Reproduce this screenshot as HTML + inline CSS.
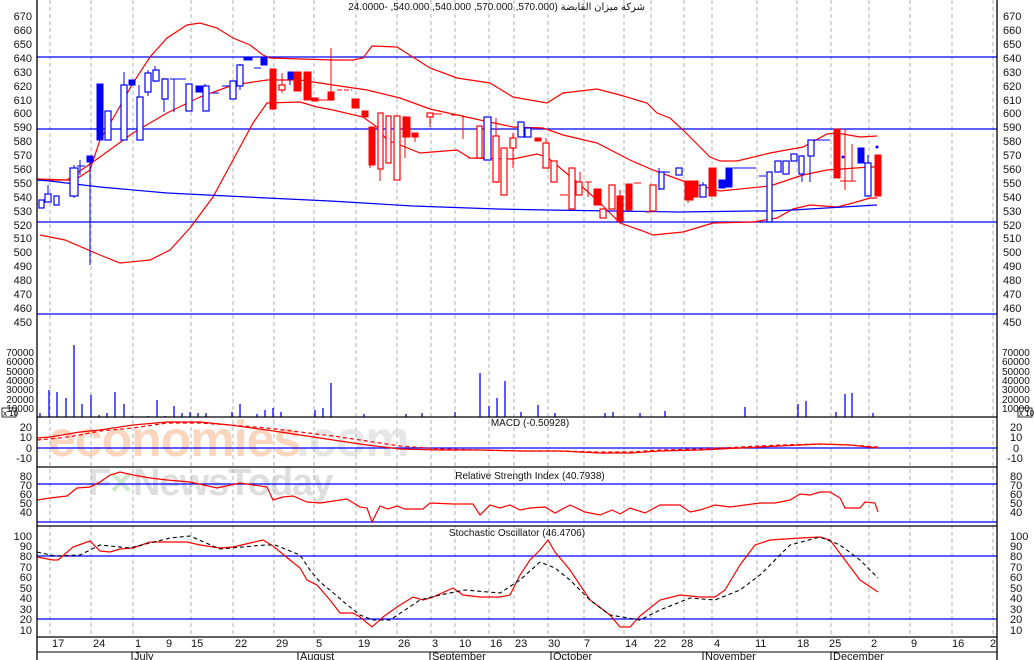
<!DOCTYPE html>
<html><head><meta charset="utf-8"><style>
html,body{margin:0;padding:0;background:#fff;}
svg{display:block;font-family:"Liberation Sans","Noto Sans CJK SC",sans-serif;}
.ax{font-size:11px;fill:#111;}
.vx{font-size:10px;fill:#111;}
.g{stroke:#b0b0b0;stroke-dasharray:4,3;stroke-width:1;}
.hb{stroke:#0000ff;stroke-width:1.3;}
.r{fill:none;stroke:#ff0000;stroke-width:1.2;}
.b{fill:none;stroke:#0000ff;stroke-width:1.2;}
.rf{fill:#ff0000;stroke:#ff0000;}
.bf{fill:#0000ff;stroke:#0000ff;}
.rh{fill:#fff;stroke:#ff0000;stroke-width:1.2;}
.bh{fill:#fff;stroke:#0000ff;stroke-width:1.2;}
</style></head><body>
<svg width="1034" height="660" viewBox="0 0 1034 660" xmlns="http://www.w3.org/2000/svg">
<rect width="1034" height="660" fill="#fff"/>
<!-- watermark -->
<text x="48" y="456" font-size="50" font-weight="bold" fill="#fad0b4" opacity="0.85" letter-spacing="-1">economies</text>
<text x="296" y="456" font-size="50" font-weight="bold" fill="#e6e6e6" letter-spacing="-1">.com</text>
<text x="88" y="495" font-size="38" font-weight="bold" fill="#e0e0e0" letter-spacing="-1">F</text>
<text x="110" y="495" font-size="38" font-weight="bold" fill="#cfe8c8">×</text>
<text x="133" y="495" font-size="38" font-weight="bold" fill="#dedede" letter-spacing="-1">NewsToday</text>
<!-- grid -->
<g class="g">
<line x1="50" y1="0" x2="50" y2="637"/><line x1="91" y1="0" x2="91" y2="637"/><line x1="133" y1="0" x2="133" y2="637"/><line x1="191" y1="0" x2="191" y2="637"/><line x1="233" y1="0" x2="233" y2="637"/><line x1="274" y1="0" x2="274" y2="637"/><line x1="314" y1="0" x2="314" y2="637"/><line x1="356" y1="0" x2="356" y2="637"/><line x1="397" y1="0" x2="397" y2="637"/><line x1="431" y1="0" x2="431" y2="637"/><line x1="455" y1="0" x2="455" y2="637"/><line x1="489" y1="0" x2="489" y2="637"/><line x1="514" y1="0" x2="514" y2="637"/><line x1="548" y1="0" x2="548" y2="637"/><line x1="584" y1="0" x2="584" y2="637"/><line x1="624" y1="0" x2="624" y2="637"/><line x1="651" y1="0" x2="651" y2="637"/><line x1="684" y1="0" x2="684" y2="637"/><line x1="712" y1="0" x2="712" y2="637"/><line x1="757" y1="0" x2="757" y2="637"/><line x1="797" y1="0" x2="797" y2="637"/><line x1="831" y1="0" x2="831" y2="637"/><line x1="869" y1="0" x2="869" y2="637"/><line x1="910" y1="0" x2="910" y2="637"/><line x1="952" y1="0" x2="952" y2="637"/><line x1="993" y1="0" x2="993" y2="637"/>
</g>
<!-- title -->
<text x="645" y="10" font-size="10" fill="#111" text-anchor="start" direction="rtl">شركة ميزان القابضة (570.000, 570.000, 540.000, 540.000, -24.0000</text>
<!-- horizontal price lines -->
<g class="hb"><line x1="37" y1="57" x2="997" y2="57"/><line x1="37" y1="129" x2="997" y2="129"/><line x1="37" y1="222" x2="997" y2="222"/><line x1="37" y1="314" x2="997" y2="314"/></g>
<!-- bollinger -->
<polyline class="r" points="37,180 75,180 90,170 100,140 115,115 133,83 150,57 167,38 187,25 200,23 217,28 233,38 250,45 263,55 270,58 333,60 353,60 363,58 372,46 397,47 430,68 457,78 490,83 513,97 547,103 563,93 597,89 620,95 647,103 657,113 670,118 683,130 710,157 720,161 737,161 770,153 803,147 827,134 837,133 860,137 877,136"/>
<polyline class="r" points="37,179 67,180 100,157 133,133 167,113 200,97 233,85 267,80 300,80 333,85 367,90 400,98 430,109 480,120 513,127 543,128 563,135 597,143 630,160 653,170 683,181 720,191 770,186 803,175 827,170 870,167 877,167"/>
<polyline class="r" points="40,235 65,240 100,255 120,263 150,260 170,250 190,228 213,197 233,160 253,123 267,103 300,102 317,107 333,110 363,117 377,127 387,140 400,145 420,153 457,150 470,158 513,159 537,154 547,157 577,182 597,200 620,223 640,230 653,235 683,232 713,223 753,222 777,218 793,209 810,205 837,207 853,203 870,198 877,198"/>
<polyline class="b" points="37,180 50,181 83,185 100,187 167,193 267,198 330,201 413,206 497,209 547,210 613,211 680,212 753,211 770,211 793,210 843,207 877,205"/>
<!-- candles -->
<g>
<rect class="bh" x="39" y="200" width="5" height="8"/>
<line x1="48" y1="185" x2="48" y2="198" stroke="#00f"/><rect class="bh" x="45" y="194" width="6" height="8"/>
<rect class="bh" x="54" y="196" width="5" height="9"/>
<line x1="74" y1="165" x2="74" y2="198" stroke="#00f"/><rect class="bh" x="70" y="168" width="8" height="28"/>
<line x1="80" y1="160" x2="80" y2="175" stroke="#00f"/><line x1="77" y1="166" x2="85" y2="166" stroke="#00f"/>
<line x1="90" y1="156" x2="90" y2="265" stroke="#00f"/><rect class="bf" x="87" y="156" width="6" height="6"/>
<rect class="bf" x="97" y="84" width="6" height="56"/>
<rect class="bh" x="105" y="111" width="6" height="29"/>
<line x1="124" y1="72" x2="124" y2="140" stroke="#00f"/><rect class="bh" x="121" y="85" width="6" height="55"/>
<rect class="bf" x="129" y="80" width="6" height="5"/>
<line x1="139" y1="85" x2="139" y2="140" stroke="#00f"/><rect class="bh" x="137" y="97" width="6" height="43"/>
<line x1="148" y1="70" x2="148" y2="96" stroke="#00f"/><rect class="bh" x="145" y="73" width="6" height="19"/>
<line x1="155" y1="66" x2="155" y2="82" stroke="#00f"/><rect class="bh" x="153" y="70" width="6" height="11"/>
<line x1="164" y1="78" x2="164" y2="112" stroke="#00f"/><rect class="bh" x="162" y="79" width="6" height="20"/>
<line x1="170" y1="79" x2="180" y2="79" stroke="#00f"/><line x1="174" y1="79" x2="174" y2="112" stroke="#00f"/>
<line x1="177" y1="79" x2="186" y2="79" stroke="#00f"/>
<rect class="bh" x="186" y="84" width="6" height="27"/>
<rect class="bf" x="196" y="86" width="7" height="6"/>
<line x1="205" y1="84" x2="205" y2="111" stroke="#00f"/><rect class="bh" x="203" y="86" width="6" height="25"/>
<line x1="212" y1="93" x2="219" y2="93" stroke="#00f"/>
<line x1="222" y1="86" x2="229" y2="86" stroke="#00f"/>
<rect class="bh" x="230" y="81" width="6" height="18"/>
<line x1="240" y1="64" x2="240" y2="90" stroke="#00f"/><rect class="bh" x="237" y="65" width="6" height="21"/>
<rect class="bf" x="244" y="57" width="8" height="3"/>
<line x1="254" y1="68" x2="261" y2="68" stroke="#00f"/>
<rect class="bf" x="261" y="57" width="6" height="8"/>
<line x1="273" y1="69" x2="273" y2="110" stroke="#f00"/><rect class="rf" x="270" y="69" width="6" height="40"/>
<line x1="282" y1="73" x2="282" y2="93" stroke="#f00"/><rect class="rh" x="279" y="85" width="6" height="5"/>
<line x1="290" y1="72" x2="290" y2="85" stroke="#00f"/><rect class="bf" x="288" y="72" width="7" height="7"/>
<rect class="rf" x="294" y="72" width="7" height="19"/>
<rect class="rf" x="304" y="72" width="7" height="28"/>
<rect class="rf" x="312" y="98" width="6" height="3"/>
<line x1="318" y1="100" x2="328" y2="100" stroke="#f00"/>
<line x1="331" y1="48" x2="331" y2="101" stroke="#f00"/><rect class="rf" x="328" y="92" width="6" height="8"/>
<line x1="337" y1="90" x2="352" y2="90" stroke="#f00" stroke-dasharray="5,2"/>
<rect class="rf" x="352" y="99" width="7" height="9"/>
<rect class="rf" x="362" y="111" width="6" height="6"/>
<line x1="370" y1="127" x2="370" y2="168" stroke="#f00"/><rect class="rf" x="369" y="127" width="6" height="38"/>
<line x1="380" y1="113" x2="380" y2="181" stroke="#f00"/><rect class="rh" x="378" y="113" width="5" height="56"/>
<line x1="390" y1="116" x2="390" y2="163" stroke="#f00"/><rect class="rh" x="386" y="116" width="5" height="47"/>
<rect class="rh" x="394" y="116" width="6" height="64"/>
<line x1="405" y1="116" x2="405" y2="158" stroke="#f00"/><rect class="rf" x="403" y="117" width="7" height="20"/>
<line x1="415" y1="133" x2="415" y2="142" stroke="#f00"/><rect class="rf" x="412" y="133" width="6" height="4"/>
<line x1="430" y1="113" x2="430" y2="127" stroke="#f00"/><rect class="rh" x="427" y="113" width="6" height="4"/>
<line x1="433" y1="114" x2="442" y2="114" stroke="#f00"/>
<line x1="451" y1="115" x2="460" y2="115" stroke="#f00"/>
<line x1="463" y1="115" x2="463" y2="139" stroke="#f00"/>
<line x1="468" y1="158" x2="474" y2="158" stroke="#f00"/>
<rect class="rh" x="477" y="126" width="5" height="32"/>
<rect class="bh" x="484" y="117" width="7" height="43"/>
<line x1="496" y1="118" x2="496" y2="183" stroke="#f00"/><rect class="rh" x="493" y="136" width="6" height="46"/>
<rect class="rh" x="501" y="148" width="6" height="47"/>
<line x1="513" y1="133" x2="513" y2="168" stroke="#f00"/><rect class="rh" x="510" y="138" width="6" height="10"/>
<rect class="bh" x="518" y="122" width="6" height="15"/>
<rect class="bh" x="525" y="128" width="6" height="9"/>
<rect class="rf" x="535" y="138" width="6" height="3"/>
<line x1="546" y1="138" x2="546" y2="168" stroke="#f00"/><rect class="rh" x="543" y="143" width="6" height="25"/>
<rect class="rh" x="551" y="161" width="6" height="21"/>
<line x1="560" y1="195" x2="568" y2="195" stroke="#f00"/>
<rect class="rh" x="569" y="168" width="6" height="41"/>
<line x1="580" y1="172" x2="580" y2="195" stroke="#f00"/><rect class="rh" x="576" y="182" width="6" height="13"/>
<line x1="585" y1="182" x2="592" y2="182" stroke="#f00"/><line x1="588" y1="182" x2="588" y2="197" stroke="#f00"/>
<rect class="rf" x="594" y="189" width="7" height="16"/>
<rect class="rh" x="600" y="209" width="6" height="9"/>
<rect class="rh" x="609" y="185" width="6" height="24"/>
<line x1="620" y1="190" x2="620" y2="222" stroke="#f00"/><rect class="rf" x="617" y="196" width="6" height="25"/>
<rect class="rf" x="626" y="184" width="6" height="26"/>
<line x1="634" y1="183" x2="641" y2="183" stroke="#f00"/>
<line x1="645" y1="212" x2="650" y2="212" stroke="#f00"/>
<rect class="rh" x="650" y="185" width="6" height="26"/>
<line x1="659" y1="168" x2="659" y2="190" stroke="#00f"/><rect class="bh" x="659" y="172" width="5" height="17"/>
<line x1="664" y1="172" x2="670" y2="172" stroke="#00f"/><rect class="bh" x="676" y="168" width="6" height="7"/>
<line x1="688" y1="181" x2="688" y2="203" stroke="#f00"/><rect class="rf" x="685" y="181" width="8" height="19"/>
<rect class="rf" x="692" y="181" width="6" height="16"/>
<line x1="703" y1="182" x2="703" y2="197" stroke="#00f"/><rect class="bh" x="700" y="185" width="6" height="12"/>
<rect class="rf" x="709" y="168" width="7" height="28"/>
<rect class="bf" x="719" y="180" width="6" height="8"/>
<line x1="730" y1="168" x2="730" y2="187" stroke="#00f"/><rect class="bf" x="726" y="168" width="6" height="19"/>
<line x1="733" y1="168" x2="742" y2="168" stroke="#00f"/>
<line x1="742" y1="168" x2="756" y2="168" stroke="#00f"/>
<line x1="759" y1="176" x2="766" y2="176" stroke="#00f"/>
<rect class="bh" x="767" y="172" width="5" height="50"/>
<rect class="bh" x="775" y="161" width="6" height="11"/>
<rect class="bh" x="783" y="161" width="6" height="13"/>
<rect class="bh" x="791" y="154" width="6" height="7"/>
<line x1="802" y1="155" x2="802" y2="182" stroke="#00f"/><rect class="bh" x="799" y="156" width="5" height="18"/>
<line x1="810" y1="140" x2="810" y2="182" stroke="#00f"/><rect class="bh" x="808" y="140" width="6" height="16"/>
<line x1="814" y1="140" x2="830" y2="140" stroke="#00f"/>
<rect class="rf" x="834" y="129" width="6" height="49"/>
<line x1="845" y1="129" x2="845" y2="190" stroke="#f00"/><line x1="840" y1="181" x2="848" y2="181" stroke="#f00"/><circle cx="843" cy="157" r="1.5" fill="#00f"/>
<line x1="852" y1="144" x2="852" y2="181" stroke="#f00"/><line x1="847" y1="181" x2="856" y2="181" stroke="#f00"/>
<rect class="bf" x="858" y="148" width="6" height="15"/>
<line x1="868" y1="155" x2="868" y2="196" stroke="#00f"/><rect class="bh" x="865" y="163" width="6" height="33"/>
<circle cx="877" cy="147" r="1.5" fill="#00f"/>
<rect class="rf" x="875" y="155" width="6" height="41"/>
</g>
<!-- volume -->
<g stroke="#0000ff" stroke-width="1.3">
<line x1="40" y1="417" x2="40" y2="413"/><line x1="49" y1="417" x2="49" y2="390"/><line x1="57" y1="417" x2="57" y2="392"/><line x1="66" y1="417" x2="66" y2="398"/><line x1="74" y1="417" x2="74" y2="345"/><line x1="82" y1="417" x2="82" y2="404"/><line x1="91" y1="417" x2="91" y2="395"/><line x1="99" y1="417" x2="99" y2="415"/><line x1="107" y1="417" x2="107" y2="413"/><line x1="115" y1="417" x2="115" y2="392"/><line x1="124" y1="417" x2="124" y2="404"/><line x1="132" y1="417" x2="132" y2="416"/><line x1="148" y1="417" x2="148" y2="416"/><line x1="157" y1="417" x2="157" y2="400"/><line x1="165" y1="417" x2="165" y2="416"/><line x1="174" y1="417" x2="174" y2="406"/><line x1="182" y1="417" x2="182" y2="413"/><line x1="190" y1="417" x2="190" y2="412"/><line x1="198" y1="417" x2="198" y2="413"/><line x1="206" y1="417" x2="206" y2="413"/><line x1="232" y1="417" x2="232" y2="412"/><line x1="240" y1="417" x2="240" y2="404"/><line x1="257" y1="417" x2="257" y2="414"/><line x1="265" y1="417" x2="265" y2="410"/><line x1="273" y1="417" x2="273" y2="408"/><line x1="281" y1="417" x2="281" y2="412"/><line x1="315" y1="417" x2="315" y2="410"/><line x1="323" y1="417" x2="323" y2="408"/><line x1="331" y1="417" x2="331" y2="383"/><line x1="364" y1="417" x2="364" y2="414"/><line x1="406" y1="417" x2="406" y2="414"/><line x1="422" y1="417" x2="422" y2="413"/><line x1="455" y1="417" x2="455" y2="412"/><line x1="480" y1="417" x2="480" y2="373"/><line x1="489" y1="417" x2="489" y2="406"/><line x1="497" y1="417" x2="497" y2="398"/><line x1="505" y1="417" x2="505" y2="381"/><line x1="521" y1="417" x2="521" y2="412"/><line x1="538" y1="417" x2="538" y2="405"/><line x1="555" y1="417" x2="555" y2="413"/><line x1="605" y1="417" x2="605" y2="413"/><line x1="613" y1="417" x2="613" y2="412"/><line x1="640" y1="417" x2="640" y2="413"/><line x1="665" y1="417" x2="665" y2="411"/><line x1="745" y1="417" x2="745" y2="407"/><line x1="798" y1="417" x2="798" y2="404"/><line x1="806" y1="417" x2="806" y2="401"/><line x1="836" y1="417" x2="836" y2="412"/><line x1="845" y1="417" x2="845" y2="394"/><line x1="852" y1="417" x2="852" y2="393"/><line x1="873" y1="417" x2="873" y2="413"/>
</g>
<!-- panel separators -->
<g stroke="#000" stroke-width="1.3"><line x1="37" y1="417" x2="997" y2="417"/><line x1="37" y1="467" x2="997" y2="467"/><line x1="37" y1="526" x2="997" y2="526"/><line x1="37" y1="637" x2="997" y2="637"/></g>
<rect x="2" y="408" width="14" height="9" fill="#fff" stroke="#000" stroke-width="0.8"/><text x="3" y="416" font-size="8" fill="#000">x 10</text>
<rect x="1018" y="408" width="14" height="9" fill="#fff" stroke="#000" stroke-width="0.8"/><text x="1019" y="416" font-size="8" fill="#000">x 10</text>
<!-- MACD -->
<line x1="37" y1="448" x2="997" y2="448" class="hb"/>
<polyline class="r" points="37,438 50,437 80,432 100,430 133,425 167,422 200,422 230,425 267,430 300,435 333,440 367,445 400,449 440,450 480,450 520,451 560,451 600,453 630,453 660,451 700,450 740,448 780,446 820,444 850,445 878,448"/>
<polyline class="r" stroke-dasharray="4,3" points="37,440 60,438 80,435 100,431 133,428 167,423 200,423 230,425 267,428 300,432 333,436 367,441 400,446 440,449 480,450 520,451 560,451 600,452 630,452 660,450 700,449 740,447 780,445 820,444 850,445 878,447"/>
<text x="530" y="426" font-size="10" fill="#111" text-anchor="middle">MACD (-0.50928)</text>
<!-- RSI -->
<line x1="37" y1="484" x2="997" y2="484" class="hb"/><line x1="37" y1="522" x2="997" y2="522" class="hb"/>
<polyline class="r" points="37,500 50,498 67,496 77,488 90,487 100,482 110,475 120,472 133,475 150,478 167,480 190,482 217,488 240,483 267,487 273,500 283,497 293,496 307,502 320,503 347,499 360,507 367,508 372,522 380,506 388,509 397,506 405,509 423,509 430,503 453,504 473,504 480,515 490,505 500,508 510,505 520,510 530,508 545,507 555,513 570,505 585,512 600,515 612,510 620,514 630,508 645,513 660,505 680,505 690,512 700,510 715,505 730,507 745,505 760,503 775,503 790,500 800,494 810,495 820,492 830,492 840,498 845,508 860,508 865,502 875,503 878,512"/>
<text x="530" y="479" font-size="10" fill="#111" text-anchor="middle">Relative Strength Index (40.7938)</text>
<!-- Stochastic -->
<line x1="37" y1="556" x2="997" y2="556" class="hb"/><line x1="37" y1="619" x2="997" y2="619" class="hb"/>
<polyline class="r" points="37,557 53,560 58,560 73,547 90,541 100,551 110,552 120,549 133,548 150,542 167,542 187,542 200,545 220,548 233,547 250,543 263,540 273,546 290,560 300,568 307,580 317,585 330,600 340,613 353,613 360,617 372,627 383,617 397,607 413,597 423,600 433,597 453,588 463,595 480,597 500,597 510,595 520,575 530,560 540,550 548,540 555,552 570,570 590,600 610,615 620,627 630,627 640,616 660,600 680,595 700,597 715,597 725,590 740,565 755,545 770,540 800,538 820,537 830,540 845,560 860,580 878,592"/>
<polyline fill="none" stroke="#000" stroke-width="1.1" stroke-dasharray="4,3" points="37,552 55,556 80,555 100,545 130,548 170,538 190,536 220,549 265,545 275,545 300,555 310,570 320,582 330,590 345,603 360,615 373,620 390,620 420,600 440,595 465,590 500,593 520,580 540,562 555,568 570,580 590,600 610,615 640,620 660,610 690,598 715,600 740,590 760,575 790,545 820,537 840,545 860,560 878,578"/>
<text x="517" y="536" font-size="10" fill="#111" text-anchor="middle">Stochastic Oscillator (46.4706)</text>
<!-- axes -->
<g stroke="#000" stroke-width="1.3"><line x1="37" y1="0" x2="37" y2="660"/><line x1="997" y1="0" x2="997" y2="660"/><line x1="37" y1="652" x2="997" y2="652" stroke-width="1"/></g>
<g class="ax" text-anchor="end">
<text x="32" y="20">670</text><text x="32" y="34">660</text><text x="32" y="48">650</text><text x="32" y="62">640</text><text x="32" y="76">630</text><text x="32" y="90">620</text><text x="32" y="104">610</text><text x="32" y="117">600</text><text x="32" y="131">590</text><text x="32" y="145">580</text><text x="32" y="159">570</text><text x="32" y="173">560</text><text x="32" y="187">550</text><text x="32" y="201">540</text><text x="32" y="215">530</text><text x="32" y="229">520</text><text x="32" y="242">510</text><text x="32" y="256">500</text><text x="32" y="270">490</text><text x="32" y="284">480</text><text x="32" y="298">470</text><text x="32" y="312">460</text><text x="32" y="326">450</text>
<text x="32" y="431">20</text><text x="32" y="441">10</text><text x="32" y="452">0</text><text x="32" y="462">-10</text>
<text x="32" y="480">80</text><text x="32" y="489">70</text><text x="32" y="498">60</text><text x="32" y="507">50</text><text x="32" y="516">40</text>
<text x="32" y="540">100</text><text x="32" y="550">90</text><text x="32" y="560">80</text><text x="32" y="571">70</text><text x="32" y="581">60</text><text x="32" y="592">50</text><text x="32" y="602">40</text><text x="32" y="613">30</text><text x="32" y="623">20</text><text x="32" y="634">10</text>
</g>
<g class="vx" text-anchor="end">
<text x="34" y="356">70000</text><text x="34" y="365">60000</text><text x="34" y="375">50000</text><text x="34" y="384">40000</text><text x="34" y="393">30000</text><text x="34" y="403">20000</text><text x="34" y="412">10000</text>
</g>
<g class="vx">
<text x="1002" y="356">70000</text><text x="1002" y="365">60000</text><text x="1002" y="375">50000</text><text x="1002" y="384">40000</text><text x="1002" y="393">30000</text><text x="1002" y="403">20000</text><text x="1002" y="412">10000</text>
</g>
<g class="ax">
<text x="1003" y="20">670</text><text x="1003" y="34">660</text><text x="1003" y="48">650</text><text x="1003" y="62">640</text><text x="1003" y="76">630</text><text x="1003" y="90">620</text><text x="1003" y="104">610</text><text x="1003" y="117">600</text><text x="1003" y="131">590</text><text x="1003" y="145">580</text><text x="1003" y="159">570</text><text x="1003" y="173">560</text><text x="1003" y="187">550</text><text x="1003" y="201">540</text><text x="1003" y="215">530</text><text x="1003" y="229">520</text><text x="1003" y="242">510</text><text x="1003" y="256">500</text><text x="1003" y="270">490</text><text x="1003" y="284">480</text><text x="1003" y="298">470</text><text x="1003" y="312">460</text><text x="1003" y="326">450</text>
<text x="1010" y="431">20</text><text x="1010" y="441">10</text><text x="1013" y="452">0</text><text x="1007" y="462">-10</text>
<text x="1010" y="480">80</text><text x="1010" y="489">70</text><text x="1010" y="498">60</text><text x="1010" y="507">50</text><text x="1010" y="516">40</text>
<text x="1010" y="540">100</text><text x="1010" y="550">90</text><text x="1010" y="560">80</text><text x="1010" y="571">70</text><text x="1010" y="581">60</text><text x="1010" y="592">50</text><text x="1010" y="602">40</text><text x="1010" y="613">30</text><text x="1010" y="623">20</text><text x="1010" y="634">10</text>
</g>
<!-- date axis -->
<g class="ax">
<text x="52" y="647">17</text><text x="93" y="647">24</text><text x="135" y="647">1</text><text x="166" y="647">9</text><text x="191" y="647">15</text><text x="235" y="647">22</text><text x="276" y="647">29</text><text x="316" y="647">5</text><text x="358" y="647">19</text><text x="398" y="647">26</text><text x="432" y="647">3</text><text x="459" y="647">10</text><text x="490" y="647">16</text><text x="515" y="647">23</text><text x="548" y="647">30</text><text x="584" y="647">7</text><text x="625" y="647">14</text><text x="654" y="647">22</text><text x="681" y="647">28</text><text x="714" y="647">4</text><text x="755" y="647">11</text><text x="797" y="647">18</text><text x="829" y="647">25</text><text x="871" y="647">2</text><text x="911" y="647">9</text><text x="952" y="647">16</text><text x="990" y="647">2</text>
<text x="134" y="660">July</text><text x="300" y="660">August</text><text x="432" y="660">September</text><text x="553" y="660">October</text><text x="705" y="660">November</text><text x="833" y="660">December</text>
</g>
<g stroke="#000"><line x1="132" y1="652" x2="132" y2="660"/><line x1="298" y1="652" x2="298" y2="660"/><line x1="430" y1="652" x2="430" y2="660"/><line x1="551" y1="652" x2="551" y2="660"/><line x1="703" y1="652" x2="703" y2="660"/><line x1="831" y1="652" x2="831" y2="660"/></g>
</svg>
</body></html>
